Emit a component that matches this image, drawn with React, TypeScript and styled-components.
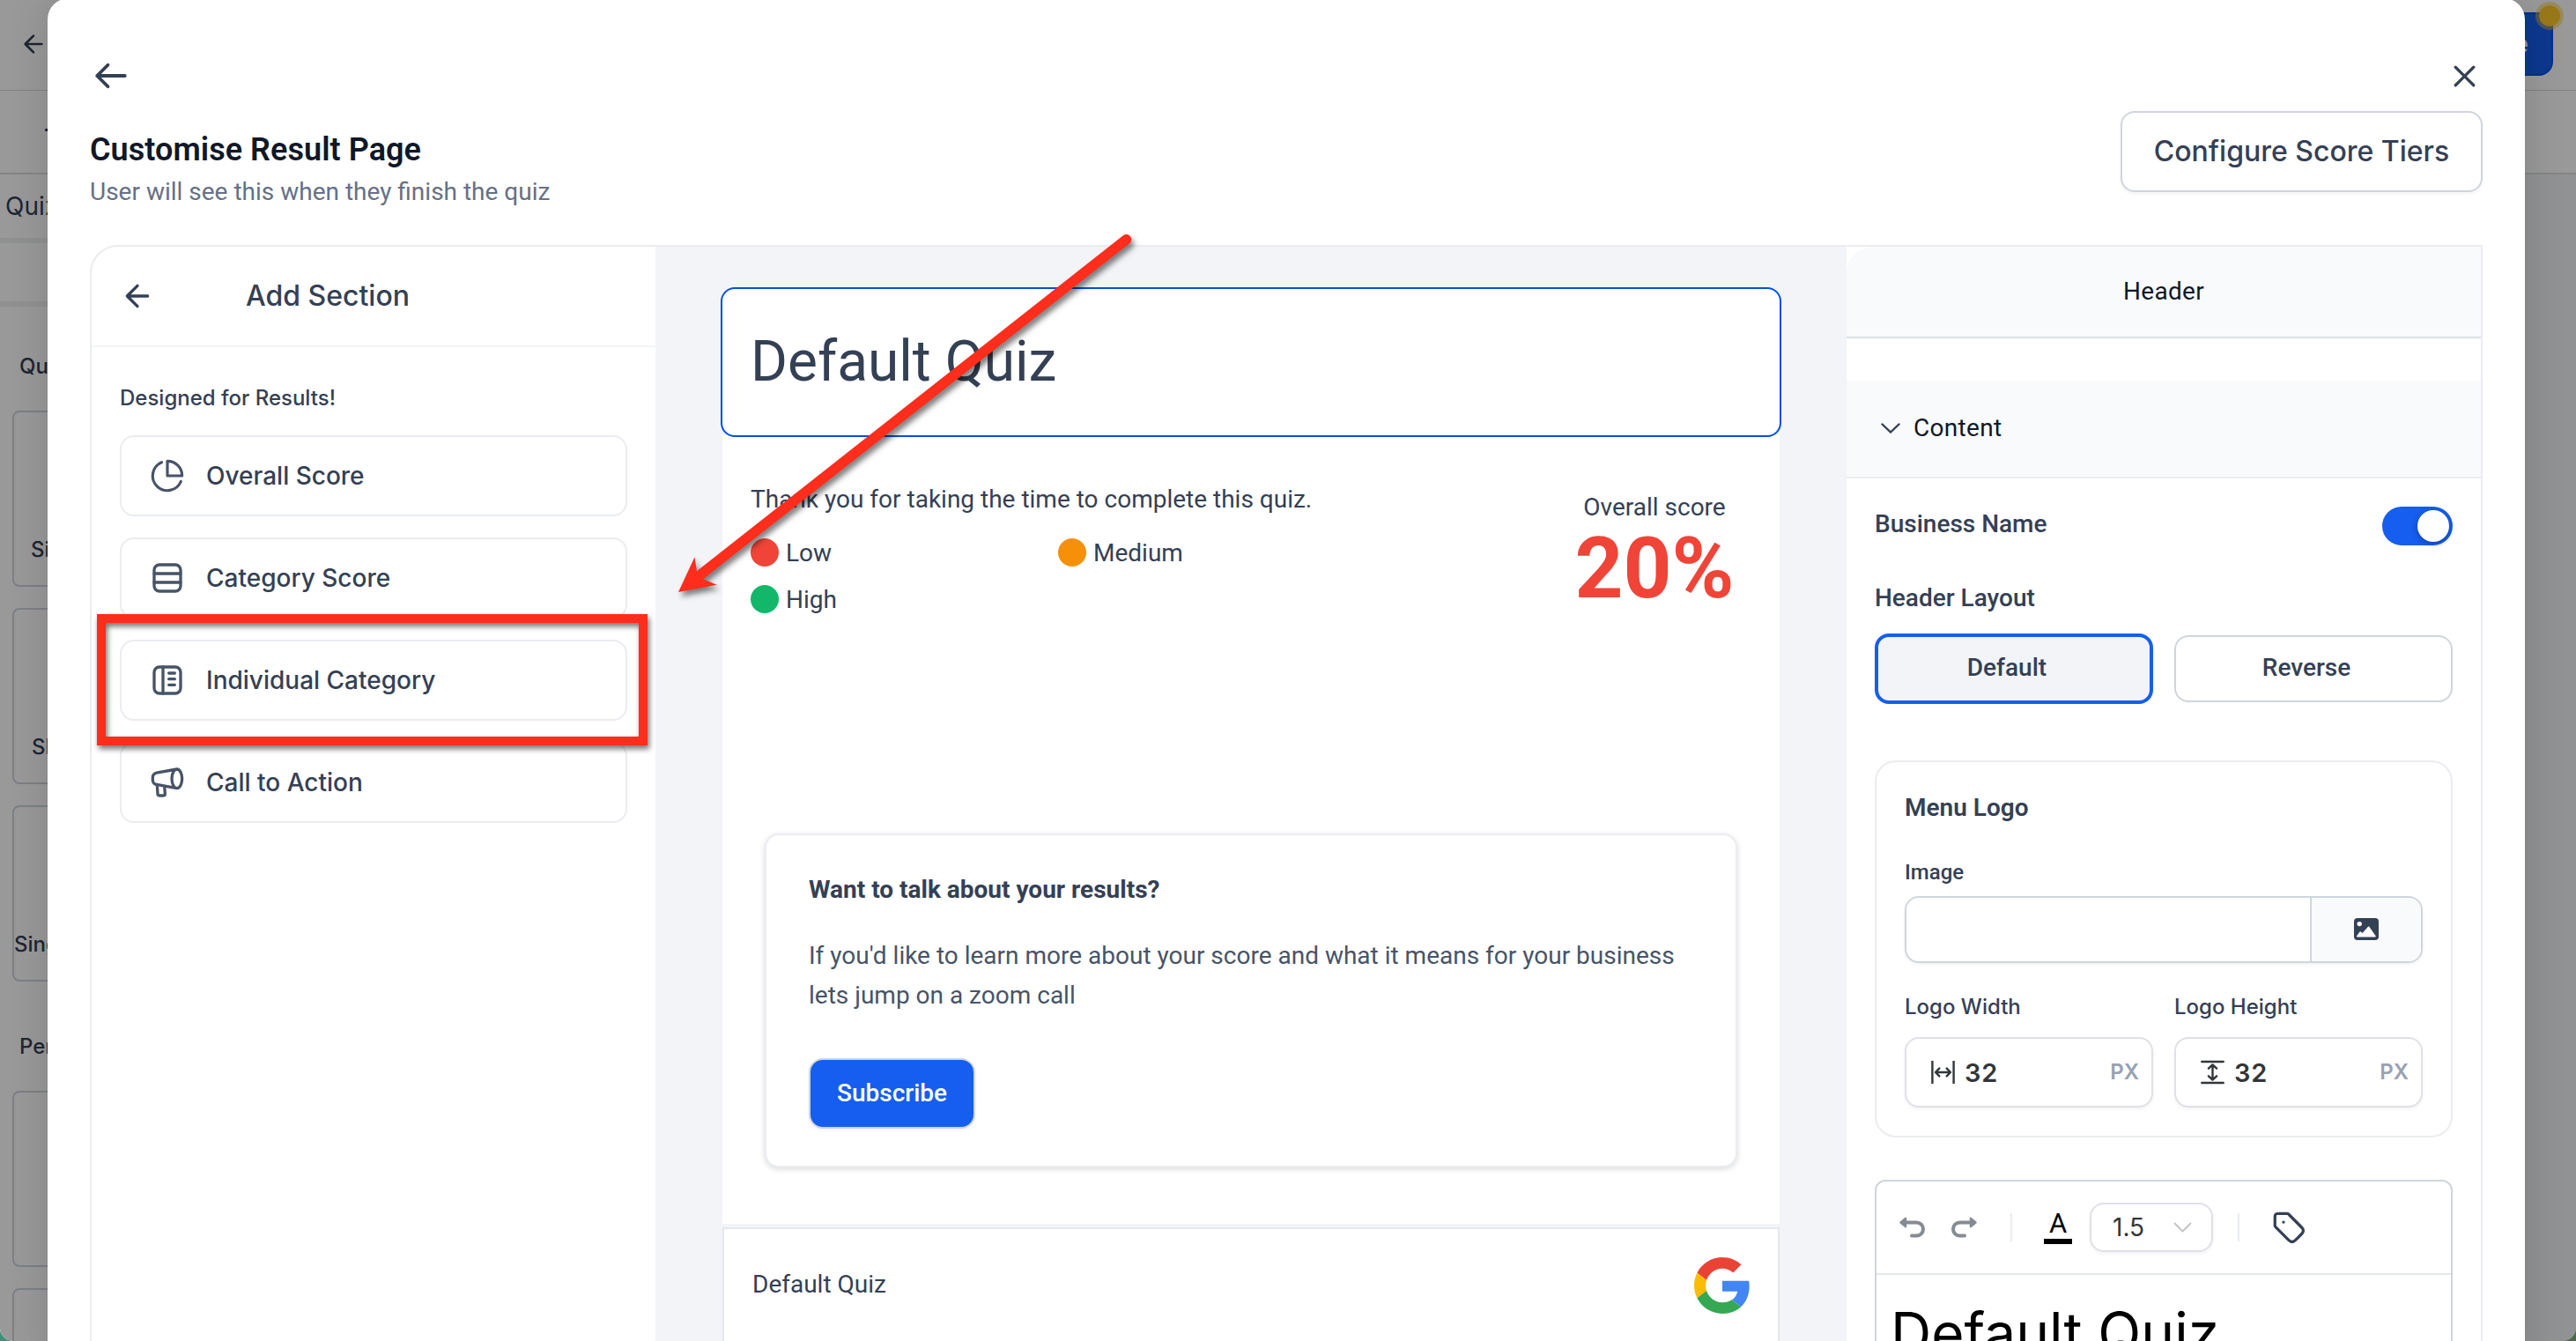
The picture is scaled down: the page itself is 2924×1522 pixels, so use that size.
import React, {useState} from 'react';
import styled, {createGlobalStyle, css} from 'styled-components';

const GlobalStyle = createGlobalStyle`
  *, *::before, *::after {
    box-sizing: border-box;
  }

  body {
    margin: 0;
    background: linear-gradient(90deg, #3f8f78 50%, #4a6a48 50%);
    font-family: Inter, "Liberation Sans", sans-serif;
    color: #344054;
  }

  button {
    font-family: inherit;
    color: inherit;
    padding: 0;
    margin: 0;
  }

  svg {
    display: block;
    flex: none;
  }
`;

/* ---------- page behind the modal ---------- */

const Screen = styled.div`
  position: relative;
  width: 2924px;
  height: 1522px;
  overflow: hidden;
  background: #f2f4f7;
  border-radius: 0 0 15px 15px;
`;

const TopBar = styled.div`
  display: flex;
  justify-content: space-between;
  height: 103px;
  padding: 14px 26px 0 22px;
  background: #fff;
  border-bottom: 1px solid #d5d7da;
`;

const TopBack = styled.div`
  padding-top: 20px;
`;

const SaveButton = styled.div`
  position: relative;
  display: flex;
  align-items: center;
  justify-content: flex-end;
  width: 160px;
  height: 72px;
  padding-right: 26px;
  border: 2px solid #004eeb;
  border-radius: 16px;
  background: #155eef;
  color: #fff;
  font-size: 28px;
  font-weight: 500;
`;

const Pulse = styled.span`
  position: absolute;
  top: -14px;
  right: -14px;
  width: 32px;
  height: 32px;
  border: 4px solid rgba(255, 200, 40, 0.45);
  border-radius: 50%;
  background: #ffc828;
  background-clip: padding-box;
`;

const SubBar = styled.div`
  height: 95px;
  padding: 43px 0 0 51px;
  background: #fff;
  border-bottom: 2px solid #dcdee2;
`;

const Dash = styled.div`
  width: 14px;
  height: 3px;
  border-radius: 2px;
  background: #1d2939;
`;

const Palette = styled.div`
  width: 620px;
  height: 1324px;
  background: #fff;
`;

const PaletteTitle = styled.div`
  height: 78px;
  padding: 17px 0 0 6px;
  border-bottom: 6px solid #eef0f4;
  font-size: 28px;
  line-height: 38px;
`;

const PaletteTabs = styled.div`
  height: 72px;
  border-bottom: 6px solid #eef0f4;
`;

const PaletteLabel = styled.div<{$top: number; $bottom: number}>`
  padding: ${p => p.$top}px 0 ${p => p.$bottom}px 22px;
  font-size: 24px;
  font-weight: 500;
  line-height: 34px;
`;

const PaletteCard = styled.div<{$indent: number}>`
  height: 200px;
  margin: 0 0 24px 14px;
  padding: 139px 0 0 ${p => p.$indent}px;
  border: 2px solid #d0d5dd;
  border-radius: 8px;
  font-size: 24px;
  font-weight: 500;
  line-height: 34px;
`;

const Overlay = styled.div`
  position: absolute;
  inset: 0;
  isolation: isolate;
  display: flex;
  justify-content: center;
  padding: 0 58px 0 54px;
  background: rgba(0, 0, 0, 0.4);
`;

/* ---------- modal ---------- */

const Modal = styled.div`
  flex: 1;
  height: 1560px;
  margin-top: -2px;
  padding: 64px 48px 0;
  border-radius: 24px;
  background: #fff;
  box-shadow: 0 0 48px rgba(0, 0, 0, 0.14);
`;

const ModalTop = styled.div`
  display: flex;
  align-items: center;
  justify-content: space-between;
  height: 48px;
  padding-left: 3px;
`;

const ModalHead = styled.div`
  display: flex;
  align-items: flex-start;
  justify-content: space-between;
  height: 168px;
`;

const Titles = styled.div`
  padding-top: 38px;
  font-family: Roboto, sans-serif;
`;

const Title = styled.h1`
  margin: 0;
  color: #101828;
  font-size: 36px;
  font-weight: 600;
  line-height: 44px;
  letter-spacing: 0.05px;
`;

const Subtitle = styled.p`
  margin: 8px 0 0;
  color: #667085;
  font-size: 28px;
  line-height: 36px;
`;

const TiersButton = styled.button`
  width: 411px;
  height: 92px;
  margin-top: 16px;
  padding-bottom: 2px;
  border: 2px solid #d0d5dd;
  border-radius: 16px;
  background: #fff;
  box-shadow: 0 2px 4px rgba(16, 24, 40, 0.05);
  font-size: 32px;
  font-weight: 500;
`;

const Editor = styled.div`
  display: grid;
  grid-template-columns: 640px 1352px 1fr;
  height: 1282px;
  border: 2px solid #eaecf0;
  border-bottom: 0;
  border-radius: 32px 0 0 0;
  overflow: hidden;
`;

/* ---------- left column ---------- */

const SectionsHead = styled.div`
  display: flex;
  align-items: center;
  height: 114px;
  padding-left: 32px;
  border-bottom: 2px solid #f2f4f7;
  font-size: 32px;
  font-weight: 500;

  span {
    margin-left: 103px;
    padding-bottom: 2px;
  }
`;

const SectionsLabel = styled.div`
  padding: 41px 0 25px 32px;
  font-size: 24px;
  font-weight: 500;
  line-height: 34px;
`;

const SectionList = styled.div`
  display: flex;
  flex-direction: column;
  gap: 24px;
  padding: 0 32px;
`;

const SectionCard = styled.button`
  display: flex;
  align-items: center;
  gap: 24px;
  height: 92px;
  padding: 0 32px;
  border: 2px solid #eaecf0;
  border-radius: 16px;
  background: #fff;
  font-size: 28px;
  font-weight: 500;

  svg {
    color: #475467;
  }
`;

/* ---------- preview ---------- */

const Preview = styled.div`
  padding: 46px 74px 0;
  background: #f2f4f7;
  font-family: Roboto, sans-serif;
`;

const PreviewHeader = styled.div`
  position: relative;
  z-index: 1;
  display: flex;
  align-items: center;
  height: 170px;
  padding: 0 32px 2px;
  border: 2px solid #004eeb;
  border-radius: 16px;
  background: #fff;
  font-size: 64px;
`;

const PreviewBody = styled.div`
  height: 895px;
  margin: -2px 2px 0;
  padding: 0 48px;
  background: #fff;
`;

const Summary = styled.div`
  display: flex;
  justify-content: space-between;
  height: 452px;
  margin-left: -16px;
  font-size: 28px;
`;

const Legend = styled.div`
  padding-top: 55px;

  p {
    margin: 0 0 26px;
    line-height: 36px;
  }
`;

const LegendGrid = styled.div`
  display: grid;
  grid-template-columns: 349px 349px;
  row-gap: 21px;
`;

const LegendItem = styled.div<{$color: string}>`
  display: flex;
  align-items: center;
  gap: 8px;
  height: 32px;

  &::before {
    content: '';
    width: 32px;
    height: 32px;
    border-radius: 50%;
    background: ${p => p.$color};
  }
`;

const Score = styled.div`
  width: 188px;
  padding-top: 64px;
  text-align: center;
  line-height: 36px;

  strong {
    display: block;
    margin: 0 -10px;
    color: #f04438;
    font-size: 96px;
    font-weight: 700;
    line-height: 102px;
  }
`;

const CtaCard = styled.div`
  height: 379px;
  padding: 44px 48px 0;
  border: 2px solid #eaecf0;
  border-radius: 16px;
  background: #fff;
  box-shadow: 0 2px 6px rgba(16, 24, 40, 0.16);
  font-size: 28px;

  h2 {
    margin: 0;
    font-size: 28px;
    font-weight: 700;
    line-height: 36px;
  }

  p {
    margin: 35px 0 48px;
    color: #475467;
    line-height: 44.8px;
  }
`;

const SubscribeButton = styled.button`
  width: 189px;
  height: 80px;
  border: 2px solid #d0d5dd;
  border-radius: 16px;
  background: #155eef;
  color: #fff;
  font-size: 28px;
  font-weight: 500;
  box-shadow: 0 2px 4px rgba(16, 24, 40, 0.05);
`;

const PreviewFooter = styled.div`
  display: flex;
  align-items: center;
  justify-content: space-between;
  height: 130px;
  margin: 4px 2px 0;
  padding: 0 31px 0 32px;
  border: 2px solid #e4e7ec;
  border-bottom: 0;
  background: #fff;
  font-size: 28px;

  span {
    padding-bottom: 3px;
  }
`;

/* ---------- settings ---------- */

const Settings = styled.div`
  background: #fff;
  font-family: Roboto, sans-serif;
  font-size: 28px;
  font-weight: 500;
`;

const SettingsHead = styled.div`
  height: 104px;
  padding-top: 33px;
  border-bottom: 2px solid #dcdfe6;
  background: radial-gradient(circle at 32px 32px, #f9fafb 32px, #fff 33px) 0 0 / 32px 32px no-repeat,
    linear-gradient(#f9fafb, #f9fafb) 32px 0 / 100% 100% no-repeat,
    linear-gradient(#f9fafb, #f9fafb) 0 32px / 100% 100% no-repeat;
  color: #101828;
  font-weight: 400;
  letter-spacing: 0.3px;
  line-height: 36px;
  text-align: center;
`;

const ContentHead = styled.div`
  display: flex;
  align-items: center;
  gap: 15px;
  height: 111px;
  margin-top: 48px;
  padding: 0 0 2px 39px;
  border-bottom: 2px solid #eaecf0;
  background: #f9fafb;
  color: #101828;
  font-weight: 400;
  letter-spacing: 0.3px;
`;

const SettingsBody = styled.div`
  padding: 32px 32px 0;
`;

const ToggleRow = styled.div`
  display: flex;
  justify-content: space-between;
  height: 85px;
  line-height: 39px;
`;

const Toggle = styled.button<{$on: boolean}>`
  display: flex;
  justify-content: ${p => p.$on ? 'flex-end' : 'flex-start'};
  width: 80px;
  height: 44px;
  padding: 4px;
  border: 0;
  border-radius: 22px;
  background: ${p => p.$on ? '#155eef' : '#d0d5dd'};

  &::before {
    content: '';
    width: 36px;
    height: 36px;
    border-radius: 50%;
    background: #fff;
    box-shadow: 0 2px 6px rgba(16, 24, 40, 0.4);
  }
`;

const LayoutLabel = styled.div`
  line-height: 37px;
  margin-bottom: 22px;
`;

const LayoutOptions = styled.div`
  display: grid;
  grid-template-columns: 1fr 1fr;
  align-items: center;
  gap: 24px;
  height: 80px;
`;

const LayoutOption = styled.button<{$active: boolean}>`
  height: 76px;
  padding: 0 16px 3px 0;
  border: 2px solid #d0d5dd;
  border-radius: 16px;
  background: #fff;
  font-size: 28px;
  font-weight: 500;

  ${p => p.$active && css`
    height: 80px;
    border: 4px solid #155eef;
    background: #f2f4f7;
  `}
`;

const LogoCard = styled.div`
  height: 428px;
  margin-top: 64px;
  padding: 34px 32px 0;
  border: 2px solid #eaecf0;
  border-radius: 24px;

  h3 {
    margin: 0 0 38px;
    font-size: 28px;
    font-weight: 600;
    line-height: 36px;
  }
`;

const FieldLabel = styled.div`
  padding-top: 1px;
  margin-bottom: 11px;
  font-size: 24px;
  line-height: 32px;
`;

const SizeLabel = styled(FieldLabel)`
  margin-bottom: 18px;
  font-family: Inter, sans-serif;
`;

const ImageInput = styled.div`
  display: flex;
  height: 76px;
  margin-bottom: 33px;
  border: 2px solid #d0d5dd;
  border-radius: 16px;
  overflow: hidden;
  box-shadow: 0 2px 4px rgba(16, 24, 40, 0.05);
`;

const ImageText = styled.div`
  flex: 1;
`;

const ImagePick = styled.div`
  display: flex;
  align-items: center;
  justify-content: center;
  width: 126px;
  padding-bottom: 2px;
  border-left: 2px solid #d0d5dd;
  background: #f9fafb;
`;

const SizeFields = styled.div`
  display: grid;
  grid-template-columns: 1fr 1fr;
  gap: 24px;
`;

const SizeInput = styled.div`
  display: flex;
  align-items: center;
  height: 80px;
  padding: 0 14px 0 28px;
  border: 2px solid #e0e0e6;
  border-radius: 16px;
  box-shadow: 0 2px 4px rgba(16, 24, 40, 0.05);
  color: #333639;
  font-family: Inter, sans-serif;

  b {
    flex: 1;
    margin-left: 11px;
    font-size: 29px;
    font-weight: 600;
    letter-spacing: 0.8px;
  }

  span {
    color: #98a2b3;
    font-size: 24px;
    font-weight: 600;
    line-height: 30px;
  }
`;

const RichEditor = styled.div`
  height: 300px;
  margin-top: 48px;
  border: 2px solid #d0d5dd;
  border-radius: 12px 12px 0 0;
  font-family: Inter, sans-serif;
`;

const Toolbar = styled.div`
  display: flex;
  align-items: center;
  height: 106px;
  padding: 0 0 0 26px;
  border-bottom: 2px solid #e4e7ec;
`;

const ToolGap = styled.span<{$w: number}>`
  width: ${p => p.$w}px;
`;

const Divider = styled.span`
  width: 2px;
  height: 32px;
  background: #eaecf0;
`;

const ColorTool = styled.span`
  width: 32px;
  height: 37px;
  border-bottom: 6px solid #000;
  color: #000;
  font-family: Roboto, sans-serif;
  font-size: 31px;
  font-weight: 400;
  line-height: 27px;
  text-align: center;
`;

const LineHeightSelect = styled.div`
  display: flex;
  align-items: center;
  justify-content: space-between;
  width: 140px;
  height: 56px;
  padding: 0 22px 1px 24px;
  border: 2px solid #e0e0e6;
  border-radius: 16px;
  box-shadow: 0 2px 4px rgba(16, 24, 40, 0.05);
  color: #333639;
  font-weight: 400;
`;

const RichText = styled.div`
  padding: 26px 0 0 16px;
  color: #000;
  font-size: 64px;
  font-weight: 400;
  line-height: 80px;
`;

/* ---------- annotation ---------- */

const Highlight = styled.div`
  position: absolute;
  left: 110px;
  top: 697px;
  width: 625px;
  height: 149px;
  border: 10px solid #ff2d1c;
  filter: drop-shadow(2px 4px 3px rgba(0, 0, 0, 0.55));
`;

const Pointer = styled.svg`
  position: absolute;
  left: 760px;
  top: 256px;
  filter: drop-shadow(3px 5px 3px rgba(0, 0, 0, 0.5));
`;

/* ---------- icons ---------- */

type IconProps = {size?: number; width?: number; children: React.ReactNode};

const Icon = ({size = 40, width = 2, children}: IconProps) => (
    <svg
        width={size}
        height={size}
        viewBox="0 0 24 24"
        fill="none"
        stroke="currentColor"
        strokeWidth={width}
        strokeLinecap="round"
        strokeLinejoin="round"
    >
        {children}
    </svg>
);

const ArrowLeft = ({size}: {size: number}) => (
    <Icon size={size}><path d="M19 12H5M12 19l-7-7 7-7"/></Icon>
);

const PieIcon = () => (
    <Icon width={1.9}>
        <path d="M12 2a10 10 0 0 1 10 10H12z"/>
        <path d="M21.2 15.9A10 10 0 1 1 8.1 2.8"/>
    </Icon>
);

const RowsIcon = () => (
    <Icon>
        <rect x="3" y="3" width="18" height="18" rx="3.6"/>
        <path d="M3 9h18M3 15h18"/>
    </Icon>
);

const ListIcon = () => (
    <Icon>
        <rect x="3" y="3" width="18" height="18" rx="3.6"/>
        <path d="M9 3v18M13 7.2h4M13 11.2h4M13 15.2h4"/>
    </Icon>
);

const MegaphoneIcon = () => (
    <Icon>
        <path d="M18.5 16C20.433 16 22 13.09 22 9.5S20.433 3 18.5 3M18.5 16C16.567 16 15 13.09 15 9.5S16.567 3 18.5 3M18.5 16L5.444 13.626c-.928-.169-1.392-.253-1.767-.437a3 3 0 0 1-1.563-1.873C2 10.914 2 10.443 2 9.5s0-1.414.114-1.816a3 3 0 0 1 1.563-1.873c.375-.184.839-.268 1.767-.437L18.5 3M5 14l.394 5.514c.037.524.056.786.17.984a1 1 0 0 0 .432.403c.206.099.469.099.994.099h1.782c.6 0 .9 0 1.122-.12a1 1 0 0 0 .44-.475c.103-.23.08-.53.034-1.128L10 14.5"/>
    </Icon>
);

const TagIcon = () => (
    <Icon size={39}>
        <path d="M8 8h.01M2 5.2v4.475c0 .489 0 .733.055.963a2 2 0 0 0 .24.579c.123.201.296.374.642.72l7.669 7.669c1.188 1.188 1.782 1.782 2.467 2.004a3 3 0 0 0 1.854 0c.685-.222 1.279-.816 2.467-2.004l2.212-2.212c1.188-1.188 1.782-1.782 2.004-2.467a3 3 0 0 0 0-1.854c-.222-.685-.816-1.279-2.004-2.467l-7.669-7.669c-.346-.346-.519-.519-.72-.642a2 2 0 0 0-.579-.24C10.408 2 10.164 2 9.675 2H5.2c-1.12 0-1.68 0-2.108.218a2 2 0 0 0-.874.874C2 3.52 2 4.08 2 5.2z"/>
    </Icon>
);

const UndoIcon = ({flip}: {flip?: boolean}) => (
    <svg width="29" height="24" viewBox="0 0 29 24" fill="none" stroke="#868b93" strokeLinecap="round" strokeLinejoin="round">
        <g transform={flip ? 'translate(29 0) scale(-1 1)' : undefined}>
            <path d="M4 6.5h15.5a7.5 7.5 0 0 1 0 15h-5.5" strokeWidth="4"/>
            <path d="M1.5 6.5L7 1.8v9.4z" fill="#868b93" strokeWidth="2.4"/>
        </g>
    </svg>
);

const PictureIcon = () => (
    <svg width="28" height="25" viewBox="0 0 28 25">
        <rect width="28" height="25" rx="4" fill="#344054"/>
        <circle cx="6.2" cy="6.6" r="2.7" fill="#fff"/>
        <path d="M3.8 21.4c-.8 0-1-.6-.7-1.2L7 15l2.6 2 6.2-7c.5-.6 1.3-.6 1.7 0l7.1 10.2c.4.6.1 1.2-.6 1.2z" fill="#fff"/>
    </svg>
);

const WidthIcon = () => (
    <svg width="27" height="28" viewBox="0 0 27 28" fill="none" stroke="#333639" strokeWidth="2.4">
        <path d="M1.4 1v26M25.6 1v26"/>
        <path d="M5.5 14h16M9.3 9.6L5 14l4.3 4.4M17.7 9.6L22 14l-4.3 4.4" strokeLinecap="round" strokeLinejoin="round"/>
    </svg>
);

const HeightIcon = () => (
    <svg width="27" height="28" viewBox="0 0 27 28" fill="none" stroke="#333639" strokeWidth="2.4" strokeLinecap="round" strokeLinejoin="round">
        <path d="M1.3 2h24.4M1.3 26h24.4"/>
        <path d="M13.5 6v16M8.9 9.7l4.6-4.2 4.6 4.2M8.9 18.3l4.6 4.2 4.6-4.2"/>
    </svg>
);

const Chevron = ({w, h, color, stroke}: {w: number; h: number; color: string; stroke: number}) => (
    <svg width={w} height={h} viewBox={`0 0 ${w} ${h}`} fill="none" stroke={color} strokeWidth={stroke} strokeLinecap="round">
        <path d={`M1.5 1.5L${w / 2} ${h - 1.5}L${w - 1.5} 1.5`}/>
    </svg>
);

const GoogleLogo = () => (
    <svg width="64" height="64" viewBox="0 0 48 48">
        <path fill="#EA4335" d="M24 9.5c3.54 0 6.71 1.22 9.21 3.6l6.85-6.85C35.9 2.38 30.47 0 24 0 14.62 0 6.51 5.38 2.56 13.22l7.98 6.19C12.43 13.72 17.74 9.5 24 9.5z"/>
        <path fill="#4285F4" d="M46.98 24.55c0-1.57-.15-3.09-.38-4.55H24v9.02h12.94c-.58 2.96-2.26 5.48-4.78 7.18l7.73 6c4.51-4.18 7.09-10.36 7.09-17.65z"/>
        <path fill="#FBBC05" d="M10.53 28.59c-.48-1.45-.76-2.99-.76-4.59s.27-3.14.76-4.59l-7.98-6.19C.92 16.46 0 20.12 0 24c0 3.88.92 7.54 2.56 10.78l7.97-6.19z"/>
        <path fill="#34A853" d="M24 48c6.48 0 11.93-2.13 15.89-5.81l-7.73-6c-2.15 1.45-4.92 2.3-8.16 2.3-6.26 0-11.57-4.22-13.47-9.91l-7.98 6.19C6.51 42.62 14.62 48 24 48z"/>
    </svg>
);

const sections = [
    {name: 'Overall Score', icon: <PieIcon/>},
    {name: 'Category Score', icon: <RowsIcon/>},
    {name: 'Individual Category', icon: <ListIcon/>},
    {name: 'Call to Action', icon: <MegaphoneIcon/>},
];

const tiers = [
    {name: 'Low', color: '#f04438'},
    {name: 'Medium', color: '#f79009'},
    {name: 'High', color: '#12b76a'},
];

const BuilderPage = () => (
    <>
        <TopBar>
            <TopBack><ArrowLeft size={32}/></TopBack>
            <SaveButton>e<Pulse/></SaveButton>
        </TopBar>
        <SubBar><Dash/></SubBar>
        <Palette>
            <PaletteTitle>Quiz</PaletteTitle>
            <PaletteTabs/>
            <PaletteLabel $top={51} $bottom={33}>Qu</PaletteLabel>
            <PaletteCard $indent={19}>Si</PaletteCard>
            <PaletteCard $indent={20}>Sl</PaletteCard>
            <PaletteCard $indent={0}>Sing</PaletteCard>
            <PaletteLabel $top={33} $bottom={33}>Per</PaletteLabel>
            <PaletteCard $indent={0}/>
            <PaletteCard $indent={0}/>
        </Palette>
    </>
);

const SectionsPanel = () => (
    <div>
        <SectionsHead>
            <ArrowLeft size={40}/>
            <span>Add Section</span>
        </SectionsHead>
        <SectionsLabel>Designed for Results!</SectionsLabel>
        <SectionList>
            {sections.map(s => (
                <SectionCard key={s.name}>{s.icon}{s.name}</SectionCard>
            ))}
        </SectionList>
    </div>
);

const PreviewPanel = () => (
    <Preview>
        <PreviewHeader>Default Quiz</PreviewHeader>
        <PreviewBody>
            <Summary>
                <Legend>
                    <p>Thank you for taking the time to complete this quiz.</p>
                    <LegendGrid>
                        {tiers.map(t => (
                            <LegendItem key={t.name} $color={t.color}>{t.name}</LegendItem>
                        ))}
                    </LegendGrid>
                </Legend>
                <Score>Overall score<strong>20%</strong></Score>
            </Summary>
            <CtaCard>
                <h2>Want to talk about your results?</h2>
                <p>If you'd like to learn more about your score and what it means for your business lets jump on a zoom call</p>
                <SubscribeButton>Subscribe</SubscribeButton>
            </CtaCard>
        </PreviewBody>
        <PreviewFooter>
            <span>Default Quiz</span>
            <GoogleLogo/>
        </PreviewFooter>
    </Preview>
);

const SettingsPanel = () => {
    const [showName, setShowName] = useState<boolean>(true);
    const [layout, setLayout] = useState<string>('Default');

    return (
        <Settings>
            <SettingsHead>Header</SettingsHead>
            <ContentHead>
                <Chevron w={22} h={12} color="#344054" stroke={2.4}/>
                Content
            </ContentHead>
            <SettingsBody>
                <ToggleRow>
                    Business Name
                    <Toggle $on={showName} onClick={() => setShowName(!showName)}/>
                </ToggleRow>
                <LayoutLabel>Header Layout</LayoutLabel>
                <LayoutOptions>
                    {['Default', 'Reverse'].map(name => (
                        <LayoutOption key={name} $active={name === layout} onClick={() => setLayout(name)}>
                            {name}
                        </LayoutOption>
                    ))}
                </LayoutOptions>
                <LogoCard>
                    <h3>Menu Logo</h3>
                    <FieldLabel>Image</FieldLabel>
                    <ImageInput>
                        <ImageText/>
                        <ImagePick><PictureIcon/></ImagePick>
                    </ImageInput>
                    <SizeFields>
                        <div>
                            <SizeLabel>Logo Width</SizeLabel>
                            <SizeInput><WidthIcon/><b>32</b><span>PX</span></SizeInput>
                        </div>
                        <div>
                            <SizeLabel>Logo Height</SizeLabel>
                            <SizeInput><HeightIcon/><b>32</b><span>PX</span></SizeInput>
                        </div>
                    </SizeFields>
                </LogoCard>
                <RichEditor>
                    <Toolbar>
                        <UndoIcon/>
                        <ToolGap $w={30}/>
                        <UndoIcon flip/>
                        <ToolGap $w={38}/>
                        <Divider/>
                        <ToolGap $w={36}/>
                        <ColorTool>A</ColorTool>
                        <ToolGap $w={20}/>
                        <LineHeightSelect>
                            1.5
                            <Chevron w={21} h={12} color="#c2c2c2" stroke={1.8}/>
                        </LineHeightSelect>
                        <ToolGap $w={28}/>
                        <Divider/>
                        <ToolGap $w={37}/>
                        <TagIcon/>
                    </Toolbar>
                    <RichText>Default Quiz</RichText>
                </RichEditor>
            </SettingsBody>
        </Settings>
    );
};

const App = () => (
    <Screen>
        <GlobalStyle/>
        <BuilderPage/>
        <Overlay>
            <Modal>
                <ModalTop>
                    <Icon size={42} width={2.2}><path d="M10 19l-7-7 7-7M3 12h18"/></Icon>
                    <Icon size={41} width={1.9}><path d="M18 6L6 18M6 6l12 12"/></Icon>
                </ModalTop>
                <ModalHead>
                    <Titles>
                        <Title>Customise Result Page</Title>
                        <Subtitle>User will see this when they finish the quiz</Subtitle>
                    </Titles>
                    <TiersButton>Configure Score Tiers</TiersButton>
                </ModalHead>
                <Editor>
                    <SectionsPanel/>
                    <PreviewPanel/>
                    <SettingsPanel/>
                </Editor>
            </Modal>
        </Overlay>
        <Highlight/>
        <Pointer width="540" height="440" viewBox="760 256 540 440">
            <path d="M1278.5 271.7L796 651.5" stroke="#ff2d1c" strokeWidth="11.5" strokeLinecap="round"/>
            <path d="M770 672l18.5-39.7 2.5 16.2 7 8.8 15.7 6.4z" fill="#ff2d1c"/>
        </Pointer>
    </Screen>
);

export default App;
